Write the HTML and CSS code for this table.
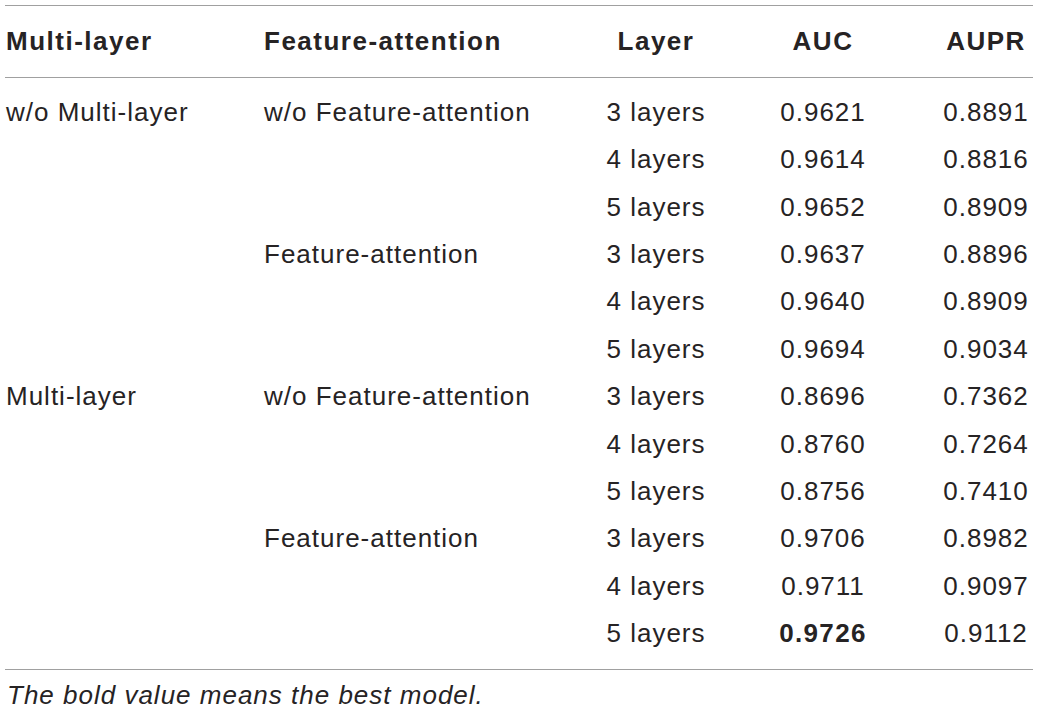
FILE: index.html
```html
<!DOCTYPE html>
<html>
<head>
<meta charset="utf-8">
<link rel="stylesheet" href="styles.css">
</head>
<body>
<div class="wrap">
  <div class="table">
    <div class="row head">
      <div class="c c1">Multi-layer</div>
      <div class="c c2">Feature-attention</div>
      <div class="c c3">Layer</div>
      <div class="c c4">AUC</div>
      <div class="c c5">AUPR</div>
    </div>
    <div class="body">
      <div class="row"><div class="c c1">w/o Multi-layer</div><div class="c c2">w/o Feature-attention</div><div class="c c3">3 layers</div><div class="c c4">0.9621</div><div class="c c5">0.8891</div></div>
      <div class="row"><div class="c c1"></div><div class="c c2"></div><div class="c c3">4 layers</div><div class="c c4">0.9614</div><div class="c c5">0.8816</div></div>
      <div class="row"><div class="c c1"></div><div class="c c2"></div><div class="c c3">5 layers</div><div class="c c4">0.9652</div><div class="c c5">0.8909</div></div>
      <div class="row"><div class="c c1"></div><div class="c c2">Feature-attention</div><div class="c c3">3 layers</div><div class="c c4">0.9637</div><div class="c c5">0.8896</div></div>
      <div class="row"><div class="c c1"></div><div class="c c2"></div><div class="c c3">4 layers</div><div class="c c4">0.9640</div><div class="c c5">0.8909</div></div>
      <div class="row"><div class="c c1"></div><div class="c c2"></div><div class="c c3">5 layers</div><div class="c c4">0.9694</div><div class="c c5">0.9034</div></div>
      <div class="row"><div class="c c1">Multi-layer</div><div class="c c2">w/o Feature-attention</div><div class="c c3">3 layers</div><div class="c c4">0.8696</div><div class="c c5">0.7362</div></div>
      <div class="row"><div class="c c1"></div><div class="c c2"></div><div class="c c3">4 layers</div><div class="c c4">0.8760</div><div class="c c5">0.7264</div></div>
      <div class="row"><div class="c c1"></div><div class="c c2"></div><div class="c c3">5 layers</div><div class="c c4">0.8756</div><div class="c c5">0.7410</div></div>
      <div class="row"><div class="c c1"></div><div class="c c2">Feature-attention</div><div class="c c3">3 layers</div><div class="c c4">0.9706</div><div class="c c5">0.8982</div></div>
      <div class="row"><div class="c c1"></div><div class="c c2"></div><div class="c c3">4 layers</div><div class="c c4">0.9711</div><div class="c c5">0.9097</div></div>
      <div class="row"><div class="c c1"></div><div class="c c2"></div><div class="c c3">5 layers</div><div class="c c4"><b class="best">0.9726</b></div><div class="c c5">0.9112</div></div>
    </div>
  </div>
  <p class="caption">The bold value means the best model.</p>
</div>
</body>
</html>
```

FILE: styles.css
```css
html, body {
  margin: 0;
  padding: 0;
  background: #ffffff;
}
body {
  font-family: "Liberation Sans", Arial, sans-serif;
  color: #262324;
}
.wrap {
  padding: 5px 6px 0 5px;
}
.table {
  width: 1028px;
  border-top: 1px solid #a0a0a0;
  border-bottom: 1px solid #a0a0a0;
}
.row {
  display: grid;
  grid-template-columns: 259px 328px 128px 219px 94px;
  height: 47.36px;
  align-items: center;
  font-size: 26px;
  line-height: 47.36px;
  letter-spacing: 1px;
}
.head {
  height: 71px;
  line-height: 71px;
  font-weight: bold;
  letter-spacing: 1.5px;
  border-bottom: 1px solid #a0a0a0;
}
.body {
  padding: 11px 0 12px;
}
.c {
  white-space: nowrap;
}
.c1 {
  padding-left: 1px;
}
.c3, .c4, .c5 {
  text-align: center;
}
.c4 {
  padding-right: 13px;
}
.best {
  font-weight: bold;
  letter-spacing: 1.3px;
}
.caption {
  margin: 8px 0 0 2px;
  font-size: 26px;
  font-style: italic;
  line-height: 34px;
  letter-spacing: 1px;
}
```
